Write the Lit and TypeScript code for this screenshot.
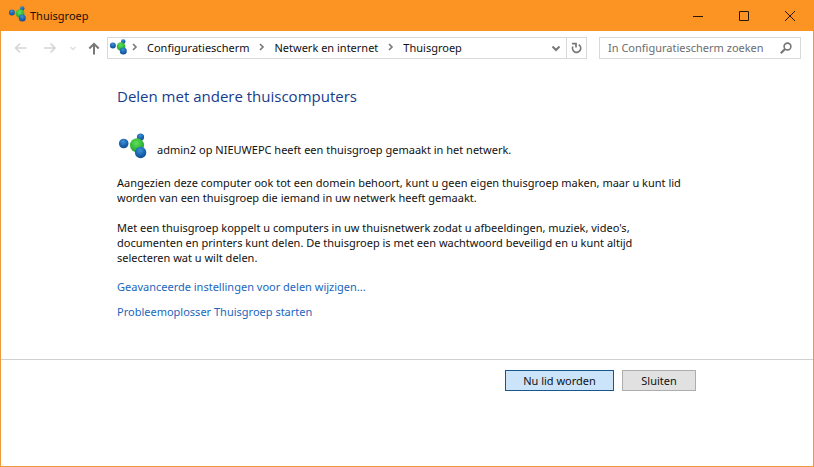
import { LitElement, html, css, svg } from "lit";
import { customElement } from "lit/decorators.js";

const base = css`
  * {
    box-sizing: border-box;
  }
  svg {
    display: block;
    flex: none;
  }
  button {
    font: inherit;
    color: inherit;
    padding: 0;
    border: 0;
    background: none;
    display: flex;
    align-items: center;
    justify-content: center;
  }
`;

@customElement("homegroup-icon")
export class HomegroupIcon extends LitElement {
  static styles = css`
    :host {
      display: block;
      flex: none;
    }
    svg {
      display: block;
      width: 100%;
      height: 100%;
    }
  `;
  render() {
    return html`<svg viewBox="0 0 28 26" aria-hidden="true">
      <defs>
        <radialGradient id="blue" cx="45%" cy="30%" r="70%">
          <stop offset="0" stop-color="#3f92d6" />
          <stop offset="0.6" stop-color="#1c66b0" />
          <stop offset="1" stop-color="#124a8c" />
        </radialGradient>
        <radialGradient id="green" cx="45%" cy="35%" r="70%">
          <stop offset="0" stop-color="#5fe05a" />
          <stop offset="0.6" stop-color="#35b93a" />
          <stop offset="1" stop-color="#1d9c2c" />
        </radialGradient>
      </defs>
      <circle cx="22.500" cy="4" r="3.600" fill="url(#blue)" />
      <circle cx="5.700" cy="10.500" r="4.800" fill="url(#blue)" />
      <circle cx="19" cy="12.200" r="7" fill="url(#green)" />
      <circle cx="22.600" cy="19.500" r="5.700" fill="url(#blue)" />
    </svg>`;
  }
}

@customElement("title-bar")
export class TitleBar extends LitElement {
  static styles = [
    base,
    css`
      :host {
        display: flex;
        align-items: center;
        height: 31px;
        padding: 0 1px 0 8px;
        background: #fb9423;
        color: #1e1006;
      }
      homegroup-icon {
        width: 18px;
        height: 16px;
        margin: 0 4px 3px 0;
      }
      .title {
        flex: 1;
      }
      .win {
        width: 46px;
        height: 31px;
      }
    `,
  ];
  render() {
    const glyphs = [
      ["Minimaliseren", svg`<path d="M0 5.5h10" />`],
      ["Maximaliseren", svg`<path d="M.5 .5h9v9h-9z" />`],
      ["Venster sluiten", svg`<path d="M0 0l10 10M10 0l-10 10" />`],
    ];
    return html`
      <homegroup-icon></homegroup-icon>
      <span class="title">Thuisgroep</span>
      ${glyphs.map(
        ([label, glyph]) => html`<button class="win" aria-label=${label}>
          <svg width="10" height="10" fill="none" stroke="#2b1705">${glyph}</svg>
        </button>`
      )}
    `;
  }
}

@customElement("address-bar")
export class AddressBar extends LitElement {
  static styles = [
    base,
    css`
      :host {
        display: flex;
        align-items: center;
        padding: 6px 12px 0;
      }
      .back,
      .forward {
        width: 14px;
        height: 22px;
        margin-right: 15px;
      }
      .forward {
        margin-right: 13px;
      }
      .recent {
        width: 8px;
        height: 22px;
        margin-right: 11px;
      }
      .up {
        width: 12px;
        height: 22px;
        margin-right: 7px;
      }
      .path {
        flex: 1;
        min-width: 0;
        display: flex;
        align-items: center;
        height: 22px;
        border: 1px solid #d9d9d9;
      }
      homegroup-icon {
        width: 18px;
        height: 16px;
        margin: 0 5px 3px 1px;
      }
      .crumb {
        padding-bottom: 2px;
        color: #111;
        text-decoration: none;
        white-space: nowrap;
      }
      .sep {
        width: 6px;
        margin: 0 9px 2px 0;
      }
      .crumb + .sep {
        margin-left: 10px;
      }
      .space {
        flex: 1;
      }
      .drop {
        width: 20px;
        height: 20px;
      }
      .refresh {
        width: 20px;
        height: 20px;
        border-left: 1px solid #d9d9d9;
      }
      .search {
        display: flex;
        align-items: center;
        width: 202px;
        height: 22px;
        margin-left: 12px;
        padding: 0 8px;
        border: 1px solid #d9d9d9;
      }
      input {
        flex: 1;
        min-width: 0;
        padding: 0 0 2px;
        border: 0;
        outline: 0;
        background: none;
        font: inherit;
      }
      input::placeholder {
        color: #6d6d6d;
        opacity: 1;
      }
    `,
  ];
  render() {
    const sep = html`<svg class="sep" width="6" height="8" fill="none" stroke="#777" stroke-width="1.6" aria-hidden="true"><path d="M1 1l3 3l-3 3" /></svg>`;
    return html`
      <button class="back" aria-label="Terug">
        <svg width="14" height="12" fill="none" stroke="#d6d6d6" stroke-width="1.6"><path d="M13.500 6H2.500M7 1.500l-4.500 4.500l4.500 4.500" /></svg>
      </button>
      <button class="forward" aria-label="Vooruit">
        <svg width="14" height="12" fill="none" stroke="#d6d6d6" stroke-width="1.6"><path d="M2 6h11M8.500 1.500l4.500 4.500l-4.500 4.500" /></svg>
      </button>
      <button class="recent" aria-label="Recente locaties">
        <svg width="8" height="5" fill="none" stroke="#dedede" stroke-width="1.4"><path d="M1.500 1l2.500 2.500l2.500-2.500" /></svg>
      </button>
      <button class="up" aria-label="Omhoog">
        <svg width="12" height="13" fill="none" stroke="#777" stroke-width="2"><path d="M6 12.500V2M1.300 6.500l4.700-4.700l4.700 4.700" /></svg>
      </button>
      <nav class="path" aria-label="Adres">
        <homegroup-icon></homegroup-icon>
        ${["Configuratiescherm", "Netwerk en internet", "Thuisgroep"].map(
          (name) => html`${sep}<a class="crumb" href="#">${name}</a>`
        )}
        <span class="space"></span>
        <button class="drop" aria-label="Vorige locaties">
          <svg width="10" height="7" fill="none" stroke="#777" stroke-width="2"><path d="M1.500 1.500l3.500 3.500l3.500-3.500" /></svg>
        </button>
        <button class="refresh" aria-label="Vernieuwen">
          <svg width="11" height="12" fill="none" stroke="#777" stroke-width="1.700"><path d="M7.700 2.700A4.100 4.100 0 1 1 1.900 4.500" /><path d="M1 1.600h4v4" /></svg>
        </button>
      </nav>
      <label class="search">
        <input type="text" placeholder="In Configuratiescherm zoeken" aria-label="In Configuratiescherm zoeken" />
        <svg width="12" height="12" fill="none" stroke="#777"><circle cx="7.500" cy="4.500" r="3.400" stroke-width="1.600" /><path d="M5 7l-4.200 4.200" stroke-width="2.200" /></svg>
      </label>
    `;
  }
}

@customElement("app-root")
export class AppRoot extends LitElement {
  static styles = [
    base,
    css`
      :host {
        display: block;
        box-sizing: border-box;
        min-height: 100vh;
        border: 1px solid #ee9a3a;
        border-top: 0;
        background: #fff;
        color: #111;
        font: 11px/15px "Noto Sans", "Open Sans", sans-serif;
      }
      title-bar {
        margin: 0 -1px;
      }
      main {
        padding: 27px 116px 30px;
      }
      h1 {
        margin: 0 0 27px;
        font: 400 15px/20px "Open Sans", "Noto Sans", sans-serif;
        color: #163c8c;
      }
      .found {
        display: flex;
        align-items: flex-end;
        gap: 10px;
        margin-bottom: 16px;
      }
      .found homegroup-icon {
        width: 30px;
        height: 26px;
      }
      p {
        margin: 0 0 15px;
      }
      .found p {
        margin: 0 0 2px;
      }
      .terms {
        margin-bottom: 14px;
      }
      .link {
        display: block;
        width: fit-content;
        margin-bottom: 10px;
        color: #1a66bd;
        text-decoration: none;
      }
      footer {
        display: flex;
        justify-content: flex-end;
        gap: 8px;
        padding: 10px 117px 0;
        border-top: 1px solid #d0d0d0;
      }
      .action {
        width: 74px;
        height: 21px;
        border: 1px solid #adadad;
        background: #e1e1e1;
      }
      .primary {
        width: 109px;
        border-color: #17568f;
        background: #cce4f9;
      }
    `,
  ];
  render() {
    return html`
      <title-bar></title-bar>
      <address-bar></address-bar>
      <main>
        <h1>Delen met andere thuiscomputers</h1>
        <div class="found">
          <homegroup-icon></homegroup-icon>
          <p>admin2 op NIEUWEPC heeft een thuisgroep gemaakt in het netwerk.</p>
        </div>
        <p>
          Aangezien deze computer ook tot een domein behoort, kunt u geen eigen thuisgroep maken, maar u kunt lid<br />
          worden van een thuisgroep die iemand in uw netwerk heeft gemaakt.
        </p>
        <p class="terms">
          Met een thuisgroep koppelt u computers in uw thuisnetwerk zodat u afbeeldingen, muziek, video's,<br />
          documenten en printers kunt delen. De thuisgroep is met een wachtwoord beveiligd en u kunt altijd<br />
          selecteren wat u wilt delen.
        </p>
        <a class="link" href="#">Geavanceerde instellingen voor delen wijzigen...</a>
        <a class="link" href="#">Probleemoplosser Thuisgroep starten</a>
      </main>
      <footer>
        <button class="action primary">Nu lid worden</button>
        <button class="action">Sluiten</button>
      </footer>
    `;
  }
}
